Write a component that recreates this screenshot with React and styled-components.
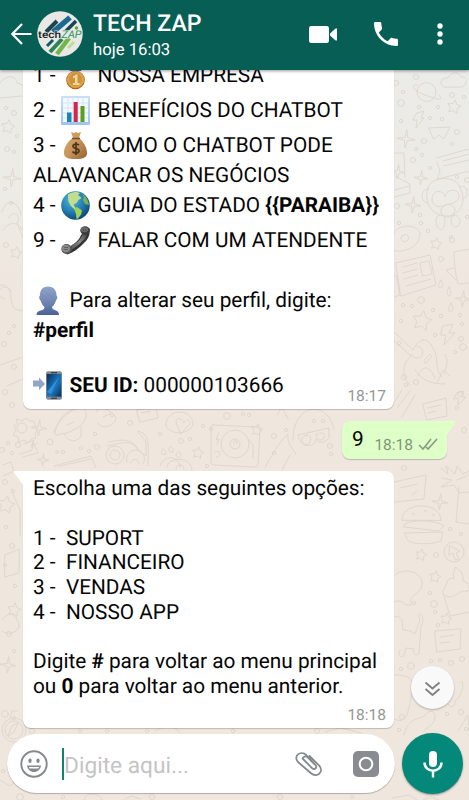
import React from "react";
import styled, { createGlobalStyle } from "styled-components";

const Global = createGlobalStyle`
  * { box-sizing: border-box; }
  html, body { margin: 0; padding: 0; }
  body { font-family: Roboto, "Liberation Sans", sans-serif; overflow: hidden; text-rendering: geometricPrecision; }
`;

const Screen = styled.div`
  position: relative;
  isolation: isolate;
  width: 469px;
  height: 800px;
  display: flex;
  flex-direction: column;
  overflow: hidden;
  background: linear-gradient(#ebebe7 70px, #ecebe6 190px, #efe8e0 255px, #efe6dd 330px, #efe6dd);
`;

const WallpaperArt = styled.svg`
  position: absolute;
  inset: 0;
  z-index: -1;
`;

const Header = styled.header`
  flex: none;
  height: 70px;
  display: flex;
  align-items: center;
  padding: 0 26px 2px 10px;
  color: #fff;
  background: #075e54;
  box-shadow: 0 1px 3px rgba(0, 0, 0, 0.4);
  z-index: 1;
`;

const Contact = styled.div`
  flex: 1;
  display: flex;
  flex-direction: column;
  padding: 5px 0 0 10px;
`;

const ContactName = styled.div`
  font-size: 23.1px;
  font-weight: 500;
  line-height: 27px;
`;

const LastSeen = styled.div`
  font-size: 16.7px;
  line-height: 27px;
`;

const Actions = styled.div`
  display: flex;
  align-items: center;
  svg { display: block; }
`;

const Chat = styled.main`
  flex: 1;
  min-height: 0;
  display: flex;
  flex-direction: column;
  justify-content: flex-end;
  align-items: flex-start;
  gap: 12px;
  padding: 0 22px 6px 23px;
  overflow: hidden;
`;

const Bubble = styled.section`
  position: relative;
  flex: none;
  display: flex;
  flex-direction: column;
  width: ${(p) => (p.$sent ? "105px" : "371px")};
  align-self: ${(p) => (p.$sent ? "flex-end" : "flex-start")};
  padding: ${(p) => p.$pad};
  color: #050505;
  background: ${(p) => (p.$sent ? "#dfffc8" : "#fff")};
  border-radius: ${(p) => p.$radius || "8px"};
  box-shadow: 0 1px 1px rgba(0, 0, 0, 0.2);
`;

const Tail = styled.svg`
  position: absolute;
  top: 0;
  ${(p) => (p.$side === "left" ? "left: -10px;" : "right: -9px;")}
`;

const Line = styled.div`
  display: flex;
  align-items: center;
  flex: none;
  height: ${(p) => p.$h}px;
  font-size: 20.8px;
  white-space: pre;
  b { font-weight: 700; }
`;

const Text = styled.span`
  padding-top: 2px;
`;

const Index = styled(Text)`
  width: 28px;
`;

const Emoji = styled.svg`
  flex: none;
  width: 29px;
  height: 29px;
  margin-right: 7.5px;
`;

const Stamp = styled.span`
  display: flex;
  align-items: center;
  gap: 5px;
  margin-left: auto;
  margin-bottom: ${(p) => p.$drop || 0}px;
  font-size: 15.5px;
  line-height: 16px;
  color: ${(p) => (p.$sent ? "#7f9577" : "#959595")};
  align-self: flex-end;
`;

const Composer = styled.footer`
  flex: none;
  display: flex;
  align-items: center;
  gap: 7px;
  height: 66px;
  padding: 0 6px 7px 7px;
`;

const InputPill = styled.div`
  width: 388px;
  height: 59px;
  display: flex;
  align-items: center;
  padding: 0 16px 0 13px;
  border-radius: 30px;
  background: #fff;
  box-shadow: 0 1px 1px rgba(0, 0, 0, 0.25);
`;

const Placeholder = styled.span`
  flex: 1;
  display: flex;
  align-items: center;
  height: 32px;
  padding-top: 3px;
  margin-left: 14px;
  border-left: 2px solid #128272;
  font-size: 22.7px;
  color: #c4c4c4;
`;

const MicButton = styled.div`
  flex: none;
  width: 61px;
  height: 61px;
  display: grid;
  place-items: center;
  border-radius: 50%;
  background: #04887a;
  box-shadow: 0 1px 2px rgba(0, 0, 0, 0.35);
`;

const ScrollDown = styled.div`
  position: absolute;
  left: 411px;
  top: 666px;
  width: 43px;
  height: 43px;
  display: grid;
  place-items: center;
  padding-top: 3px;
  border-radius: 50%;
  background: #f9f9f9;
  box-shadow: 0 1px 2px rgba(0, 0, 0, 0.25);
`;

/* ---------- wallpaper ---------- */

const starPath = (x, y, r, inner = 0.5, n = 5, rot = 0) =>
  Array.from({ length: n * 2 }, (_, i) => {
    const a = rot - Math.PI / 2 + (i * Math.PI) / n;
    const q = i % 2 ? r * inner : r;
    return `${i ? "L" : "M"}${(x + q * Math.cos(a)).toFixed(1)} ${(y + q * Math.sin(a)).toFixed(1)}`;
  }).join("") + "Z";

const stars = [
  [454, 107, 7], [436, 244, 6], [422, 321, 10], [198, 453, 6], [257, 430, 6], [421, 555, 6], [435, 577, 6], [446, 619, 6], [8, 127, 7], [16, 253, 6], [6, 505, 9], [14, 610, 7],
];
const sparkles = [
  [406, 139, 9], [421, 178, 7], [413, 205, 8], [463, 299, 8], [440, 502, 8], [39, 428, 8], [43, 460, 6], [12, 178, 9], [8, 665, 8], [398, 172, 7],
];
const bubbles = [
  [416, 77, 3], [396, 83, 3], [401, 103, 4], [403, 92, 2], [419, 107, 2], [438, 107, 2], [430, 118, 2], [442, 119, 2], [452, 95, 3], [464, 97, 2], [401, 121, 2], [424, 141, 3], [457, 132, 3], [416, 149, 2], [413, 160, 3], [422, 155, 2], [430, 168, 2], [452, 144, 2], [457, 177, 2], [467, 180, 3], [397, 206, 3], [420, 215, 2], [399, 223, 2], [421, 223, 2], [428, 231, 2], [451, 237, 2], [452, 240, 3], [467, 217, 2], [441, 259, 3], [421, 300, 4], [403, 305, 2], [412, 306, 2], [433, 310, 2], [441, 316, 2], [460, 315, 2], [401, 321, 2], [435, 335, 2], [462, 324, 2], [461, 339, 3], [463, 347, 4], [455, 352, 2], [399, 343, 2], [404, 377, 3], [416, 382, 3], [406, 385, 2], [460, 394, 3], [457, 408, 2], [464, 430, 3], [404, 468, 3], [450, 529, 2], [461, 534, 2], [436, 555, 3], [430, 593, 2], [414, 603, 2], [434, 604, 4], [435, 612, 2], [438, 625, 2], [431, 661, 2], [440, 660, 2], [451, 663, 3], [462, 659, 3], [401, 669, 2], [411, 666, 4], [447, 714, 2], [461, 712, 3], [466, 729, 2], [130, 423, 3], [112, 415, 2], [95, 434, 2], [89, 451, 2], [81, 448, 2], [63, 452, 2], [57, 452, 1.5], [50, 442, 3.5], [97, 447, 3], [160, 434, 2], [181, 441, 3], [190, 439, 2], [203, 426, 2], [227, 416, 4], [243, 414, 2], [249, 415, 2], [211, 429, 2], [207, 466, 2], [274, 436, 3], [274, 453, 2], [286, 430, 2], [314, 421, 2], [323, 421, 2], [330, 446, 3], [331, 454, 2], [18, 445, 3], [8, 443, 2], [2, 450, 3], [12, 453, 2], [7, 149, 3], [14, 152, 2], [17, 136, 2], [5, 189, 2], [6, 245, 3], [11, 203, 2], [6, 108, 2], [14, 113, 3], [9, 333, 2], [14, 326, 2], [4, 344, 3], [14, 367, 3], [5, 392, 3], [12, 405, 3], [5, 482, 3], [13, 491, 2], [6, 527, 2], [12, 546, 3], [5, 565, 2], [15, 586, 2], [9, 634, 3], [14, 651, 2], [5, 714, 4], [14, 718, 2], [3, 771, 2], [399, 730, 2], [402, 717, 3], [32, 731, 3], [80, 731, 2], [107, 731, 2], [147, 731, 2], [233, 731, 2], [317, 731, 3], [20, 797, 4], [63, 797, 2], [152, 797, 3], [280, 797, 3], [352, 797, 2],
];

const doodles = [
  // planet, cloud
  "M417 92a9.500 9.500 0 1 1 19 0a9.500 9.500 0 1 1-19 0M417 85c-8-1-3 6 8 10s20 7 14 0M444 87c-6-3-3-10 4-9c3-7 12-6 13-1c7-1 7 8 1 10z",
  // bolts, paper plane
  "M417 113l7-2-3 7 3 0-8 10 1-8-4 0zM429 128l21-1-6 12-5-4-5 4zM443 326l10-2-4 9 6 0-11 12 2-10-5 0z",
  // ticket and cake
  "M436 158l33-9M437 162l3 9-3 8 5-1 27-7M443 161l26-7M444 166l25-6M390 153l14 0 1 24M395 176l15 8 0 9-16 4M395 190l14-4",
  // monkey
  "M428 188c2-12 30-14 33 2c6 12-2 26-14 26c-15 0-24-14-19-28zM428 189c-8 0-8 14 0 14M460 187c8-4 10 10 3 12M432 200c0-12 12-10 13-3c1-9 15-9 14 0c-1 6-11 8-14 8c-7 4-13 0-13-5zM441 209c-2 10 13 12 14 0c-4-6-8-7-14 0M436 220c0-7 9-7 9 1c0 12-9 11-9-1M451 220c0-7 9-6 9 2c-1 7-9 7-9-2",
  // donut, newspaper
  "M394 233c5-10 26-9 26 2c-1 14-22 20-29 14M402 236c4-4 8 0 6 4c-4 4-9 0-6-4M396 263l34-8 6 30-35 11zM403 267l14-4M403 273l14-4M404 279l14-4M406 286l25-7M420 263l9-2 3 13-9 2zM389 280l7-5 4 20-6 2",
  // cup and drops
  "M469 249l-15 3c0 10 1 20 4 32l11-1M454 268l-8 2 10 10M441 280q-5 8 0 8q4-2 0-8M451 303q-5 9 0 9q4-2 0-9M449 287q4 9 0 9q-4-2 0-9",
  // guitar
  "M392 330l21 20c6-12 14-14 20-2c7 13 0 18 9 29M391 338l20 18c-10 9-9 22-1 29M417 346a6 6 0 1 1-6 8M424 360l6-6 2 2-6 7zM444 374c4-12 4-12 1-20M437 383l6-13 7 6",
  // mask and chat note
  "M415 370c8 12 18 14 30 14M418 376c5-12 12-10 17 2M392 406l10-16M397 408l13-17M402 417l13-22M423 404l23-6 1 18-20 4zM428 408l13-3M428 413l8-2M457 393l7-2-2 6 4 0-8 8 0-7-4 1z",
  // ticket, burger, hand
  "M394 482l32-7-2 24-30 3M400 488l17-4M412 495l5-4M402 520c-1-18 38-20 39 0zM405 524c8-5 31-4 39 2l-5 5-35-4zM405 533l38-1-2 9c-10 4-32 4-34-2zM413 515a1 1 0 1 1 1 0M425 512a1 1 0 1 1 1 0M433 516a1 1 0 1 1 1 0M441 468l7 6-2-8 9 8 2-8 6 8 6-3M442 478l10 2-11 7 13-2 5 8 10-1M457 480l12-5M459 487l-3 35 13 2",
  // pointer badge, ghost, cupcake
  "M444 552a10 10 0 1 1 20 0a10 10 0 1 1-20 0M450 546l10 5-4 2 3 6-4 1-2-7-4 2zM394 576c9-10 30-4 28 9c-1 10-14 9-11 20c-7 3-8-8-17-3M443 591c6-10 4-15 11-12c-2-8 2-9 1-12c8 4 8 10 8 14c5 1 6 5 6 8M443 593l7 23 19-4M443 593c5 8 12 2 16 0c5-4 7 0 10-3",
  // cat, note
  "M394 616c3 2 6-1 8 4l1 10c8 0 12 4 12 4c3-9 7-16 3-18c4-6 7 4 3 10l-2 28c-4 2-6 0-5-5l-8-1-2 8c-4 2-7-1-4-6M435 631l23-2 3 0-1 20-23 3zM440 637l14-2M440 643l9-1M394 675c20 0 20 6 17 22s-4 28-17 22M404 735c5-20 16-14 21-20s11-4 10 3c-2 9-9 9-11 13M460 683c5-8 4 12-5 18c0 7-4 7-7 3M458 731l10-16 1 17",
  // rocket and camera
  "M55 433c2-12 9-20 18-24M82 408c-9 0-21 8-28 23c0 3 1 4 3 4c14-2 26-8 29-18c0-5 0-8-4-9zM67 425l7-3M64 433c2 8 12 11 17 3l0-9M96 412c2-6 13-5 20 6c-1 9-16 12-18 5M103 417l9-4M137 410l19-3 2 11-18 4zM141 413l9-2",
  // helmet
  "M166 425c-1-16 26-18 27-1c-2 11-25 12-27 1zM176 422c0-6 7-3 8 1c3-7 9 0 4 3l-7 8z",
  // turntable
  "M213 425l44 2q3 0 3 3l-2 34q0 3-3 3l-41-2q-3 0-3-3l0-34q0-3 2-3zM221 444a14 14 0 1 1 28 0a14 14 0 1 1-28 0M230 444a5 5 0 1 1 10 0a5 5 0 1 1-10 0M234 444a2 2 0 1 1 3 0M248 439l5 6 0 13M219 432l-3 8 3-1-2 5M215 452a3 3 0 1 1 1 5",
  // buggy
  "M107 446c12-2 24-9 33 6l6 4 0-12c0-6-10-12-8-13c13 4 10 15 10 34M106 455a9 9 0 1 1 18 0a9 9 0 1 1-18 0M110 455a5 5 0 1 1 10 0a5 5 0 1 1-10 0M127 462a9 9 0 1 1 16 2M131 463a4 4 0 1 1 8 1M109 442c15-4 25-2 29 8",
  // paw, camera, face with glasses
  "M162 454c-3-7 4-6 4 0zM169 451c-2-7 6-5 4 1zM176 455c2-7 8-2 3 3zM160 466c4-12 19-11 20 1M167 467c0-9 24-13 25 4M176 469a4 4 0 1 1 8 0M54 466l37-10 5 12M60 466l31-7M277 415l5-8 6 12M293 440c0-38 35-40 41-11M298 435l31-7 0 9c-2 5-9 8-13 2c0 8-16 11-18-4M302 438c5-6 11-2 8 4c-5 6-9 1-8-4M316 435c6-4 10-2 8 3c-4 4-7 2-8-3M265 467l12-20 6-8 5-5c-2 9 7 17 8 21M282 470l8-15",
  // gear and windmill
  "M17 419l5 2 4-3 4 3 4 0 1 5 3 3-3 4 1 5-5 1-3 4-4-3-5 2-1-5-5-2 3-4-2-5 3-2zM17 428a5 5 0 1 1 10 0a5 5 0 1 1-10 0M24 444l10-4-3 7 6-4M20 454l12-4 1-8 5 11-15 4",
  // left margin
  "M0 83c7-9 15-8 17 0l6 2M0 98l22-2M2 212c4-15 17-11 19 3M9 218c2-8 14-4 8 5l6 15M3 230c9-12 18-5 20 1M0 285c15-1 8 18 15 24l8 2M5 299a6 6 0 1 1 6-7M0 365l23-8M7 386l16-7M3 465l8-3 3 9-11 5M11 489l9 21 0 26M5 555l14-6 0 24-14 4zM2 620c10-14 16 0 17 5s-9 12-17 6",
  // compass and lower edge
  "M2 730a12 12 0 1 1 24 0a12 12 0 1 1-24 0M5 730a9 9 0 1 1 18 0a9 9 0 1 1-18 0M12 726l6-3-4 9-6 4zM10 718l2-7 5 0M155 732c6-7 20-7 24 0M325 732l15-4 22 5M0 780l10 6 5-4M84 800c2-8 15-8 18 0M125 799l7-3 8 3M423 800l8-3 8 3M392 798l17-3 8 5",
];

function Wallpaper() {
  return (
    <WallpaperArt width="469" height="800" fill="none" stroke="#ddd6cd" strokeWidth=".9" strokeLinejoin="round" strokeLinecap="round" aria-hidden="true">
      {doodles.map((d, i) => <path key={i} d={d} />)}
      {stars.map(([x, y, r], i) => <path key={i} d={starPath(x, y, r, 0.52, 5, 0.2)} />)}
      {sparkles.map(([x, y, r], i) => <path key={i} d={starPath(x, y, r, 0.24, 4, 0.1)} />)}
      {bubbles.map(([x, y, r], i) => <circle key={i} cx={x} cy={y} r={r * 0.85} />)}
    </WallpaperArt>
  );
}

/* ---------- emoji ---------- */

function Medal() {
  return (
    <Emoji viewBox="0 0 29 29">
      <path d="M6 1h17l-3 9H9z" fill="#3f6fb0" />
      <circle cx="14.500" cy="19" r="9.300" fill="#a8681d" />
      <circle cx="14.500" cy="18.500" r="8.600" fill="#e0a446" />
      <circle cx="14.500" cy="18.500" r="6.500" fill="#cb9244" />
      <path d="M12 15.500l3-2h1.500v8.500h2v2h-6.500v-2h2v-5.500l-2 .8z" fill="#f3d792" />
    </Emoji>
  );
}

function BarChart() {
  return (
    <Emoji viewBox="0 0 29 29">
      <defs>
        <linearGradient id="chartFrame" x2="0" y2="1"><stop stopColor="#c9e0f8" /><stop offset="1" stopColor="#9cc4f2" /></linearGradient>
      </defs>
      <rect width="29" height="29" rx="1" fill="url(#chartFrame)" />
      <rect x="2" y="2" width="25" height="24" fill="#f4f9fd" />
      <path d="M2 7h25M2 12h25M2 17h25M2 22h25M7 2v24M12 2v24M17 2v24M22 2v24" stroke="#cde3f3" strokeWidth=".8" />
      <path d="M6 16.500h4.500v9.500h-4.500z" fill="#1686b4" />
      <path d="M12.700 6h4v20h-4z" fill="#d5254b" />
      <path d="M19.500 10h4v16h-4z" fill="#5a9f20" />
    </Emoji>
  );
}

function MoneyBag() {
  return (
    <Emoji viewBox="0 0 29 29">
      <defs>
        <linearGradient id="bag" x2="1" y2="1"><stop stopColor="#d5a66d" /><stop offset=".5" stopColor="#c8965b" /><stop offset="1" stopColor="#91602f" /></linearGradient>
      </defs>
      <path d="M10 1l3 1 2-1 2 1 3-1-2 6c5 4 8 10 8 15 0 4-3 6-11.500 6s-11.500-2-11.500-6c0-6 4-12 9-15z" fill="url(#bag)" />
      <path d="M11 7.500h8" stroke="#755027" strokeWidth="1.500" />
      <path d="M18 14.200c-1-1.800-6-1.500-6 1 0 3 6 1.500 6 4.500 0 2.700-5 3-6.500.8M15 11v13" fill="none" stroke="#4e351c" strokeWidth="1.700" />
    </Emoji>
  );
}

function Globe() {
  return (
    <Emoji viewBox="0 0 29 29">
      <defs>
        <radialGradient id="sea" cx=".38" cy=".3" r=".75"><stop stopColor="#55b9df" /><stop offset=".55" stopColor="#237fb1" /><stop offset="1" stopColor="#09446f" /></radialGradient>
      </defs>
      <circle cx="14.500" cy="14.500" r="14.300" fill="url(#sea)" />
      <path d="M7 3.500c3-2 6-2.500 9-2.500l3 1-2 2 3.500 3-3 2-2 3-3 1.500 2 3.500 2 2-3-.5-4-4-2-4-.5-4z" fill="#c2de8c" />
      <path d="M13 17.500l3-1.500 5 3.500-1 4-3 4-1.500.5-.5-5z" fill="#9fcf5c" />
      <path d="M21 3c4 2 6 6 7 11l-4-1-2-4 1-3z" fill="#7db354" />
    </Emoji>
  );
}

function Receiver() {
  return (
    <Emoji viewBox="0 0 29 29">
      <defs>
        <linearGradient id="handset" x1="0" y1="1" x2="1" y2="0"><stop stopColor="#4a4a4a" /><stop offset=".5" stopColor="#888" /><stop offset="1" stopColor="#333" /></linearGradient>
      </defs>
      <path d="M28.500 2c1 6-1 11-6 15.500C18 22 12 27 6 28.500L4 26l7-7c4-2 8-6.500 9-10z" fill="#333" />
      <path d="M27 5c-1 6-3 8-7 11.500S13 22 9 25l2-6c5-1.500 9-6 10.500-10.500z" fill="url(#handset)" />
      <ellipse cx="24" cy="4.500" rx="4.700" ry="4.200" fill="#3a3a3a" />
      <ellipse cx="23.500" cy="3.600" rx="3.700" ry="2.600" fill="#6a6a6a" />
      <ellipse cx="5.500" cy="23" rx="5.200" ry="4.900" fill="#555" />
      <ellipse cx="5" cy="22.500" rx="4" ry="3.800" fill="#8a8a8a" />
      <path d="M4 21.500h.1M6 21.500h.1M4 23.500h.1M6 23.500h.1M22.500 4h.1M24.500 4h.1" stroke="#333" strokeWidth="1" strokeLinecap="round" />
    </Emoji>
  );
}

function Person() {
  return (
    <Emoji viewBox="0 0 29 29">
      <defs><linearGradient id="person" x2="0" y2="1"><stop stopColor="#8fa4cb" /><stop offset=".55" stopColor="#7085b0" /><stop offset="1" stopColor="#496197" /></linearGradient></defs>
      <path d="M15 .5c6 0 8.500 4 8.500 9 1.500 1 .5 4-.5 5-1 3-2 5-4 6.500 0 1.500 1 2.500 4 3.500 2 1 3 2 3 4.500H3.500c0-2.500 1-3.500 4-4.500 3-.5 4-2 4-3.500-2-1.500-3-3.500-4-6.500-1-1-2-4-.5-5 0-5 2-9 8-9z" fill="url(#person)" />
    </Emoji>
  );
}

function IncomingPhone() {
  return (
    <Emoji viewBox="0 0 29 29">
      <defs>
        <linearGradient id="phoneGlass" x2="1" y2="1"><stop stopColor="#112845" /><stop offset=".45" stopColor="#126fb7" /><stop offset=".6" stopColor="#1b72ba" /><stop offset="1" stopColor="#082c55" /></linearGradient>
      </defs>
      <path d="M0 9.500h6v-3L12 13l-6 6v-3.500H0z" fill="#91a5c6" />
      <rect x="13" y=".3" width="16" height="28.400" rx="2" fill="#858a92" />
      <rect x="13.800" y="3" width="14.400" height="22.700" fill="url(#phoneGlass)" />
      <path d="M14 21l12-15-8 17z" fill="#49adec" opacity=".55" />
      <path d="M18 1.700h6M18 27.200h6" stroke="#272c34" strokeWidth="1.100" />
    </Emoji>
  );
}

/* ---------- header and composer icons ---------- */

const BackArrow = () => (
  <svg width="22" height="24" viewBox="0 0 22 24" fill="none" stroke="#fff" strokeWidth="2.200"><path d="M21.500 12H2.500M12 2L2.300 12l9.700 10" /></svg>
);

const LogoSvg = styled.svg`
  flex: none;
  margin-left: 5px;
`;

const Logo = () => (
  <LogoSvg width="46" height="46" viewBox="0 0 46 46">
    <circle cx="23" cy="23" r="22.700" fill="#e8e9e5" />
    <g fill="none">
      <path d="M20 10L9 21" stroke="#1c464c" strokeWidth="4" />
      <path d="M33 6.500L16 21" stroke="#1d6793" strokeWidth="5.500" />
      <path d="M39 10l-10 10" stroke="#194656" strokeWidth="3.500" />
      <path d="M16 29l-6 6" stroke="#15586b" strokeWidth="3" />
      <path d="M25 28L13 41" stroke="#2d8354" strokeWidth="4" />
      <path d="M32 27L20 43" stroke="#72b54a" strokeWidth="4.500" />
      <path d="M37 31l-6 6" stroke="#bddc9c" strokeWidth="3" />
    </g>
    <circle cx="39.500" cy="17" r="1.700" fill="#54a54b" />
    <text x="1" y="27" textLength="23" lengthAdjust="spacingAndGlyphs" fontFamily="Roboto, sans-serif" fontSize="10" fontWeight="500" fill="#151b1b" stroke="#e8e9e5" strokeWidth="1" paintOrder="stroke">tech</text>
    <text x="24.500" y="27" textLength="20" lengthAdjust="spacingAndGlyphs" fontFamily="Roboto, sans-serif" fontSize="10.500" fontStyle="italic" fill="#31945e" stroke="#e8e9e5" strokeWidth="1" paintOrder="stroke">ZAP</text>
  </LogoSvg>
);

const VideoIcon = () => (
  <svg width="28" height="17" viewBox="0 0 28 17" fill="#fff"><rect width="20" height="17" rx="2.300" /><path d="M21 7.500L26 3q2-1.500 2 .5v10q0 2-2 .5L21 9.500z" /></svg>
);

const CallIcon = styled.svg`
  margin: 0 0 0 37px;
`;

const MenuIcon = styled.svg`
  margin-left: 39px;
`;

const FaceIcon = () => (
  <svg width="28" height="28" viewBox="0 0 28 28" fill="#85898c">
    <circle cx="14" cy="14" r="12.700" fill="none" stroke="#85898c" strokeWidth="1.900" />
    <ellipse cx="10" cy="10.700" rx="1.700" ry="2.300" /><ellipse cx="18" cy="10.700" rx="1.700" ry="2.300" />
    <path d="M7 15.500h14c-.5 4-3.500 6.500-7 6.500s-6.500-2.500-7-6.500zM9 17c0 1 .8 1.500 1.500 1.500h7c.8 0 1.500-.5 1.500-1.500z" fillRule="evenodd" />
  </svg>
);

const ClipIcon = () => (
  <svg width="28" height="28" viewBox="0 0 28 28" fill="none" stroke="#85898c" strokeWidth="1.800" strokeLinecap="round" strokeLinejoin="round">
    <path d="M7.500 8.500L17.300 18.300c2.500 2 5.200-.8 3.200-3.200L11.200 5C5.500-.2-2.200 6.200 3 12L16 23.300c6 5 13.500-1.800 8.200-7.600L14.500 6M7.500 8.500c2-3.500 4.700-1.800 6.200-.2l5.100 5.300" />
  </svg>
);

const CameraIcon = styled.svg`
  margin-left: 30px;
`;

const menuRows = [
  { n: "1 -", art: <Medal />, text: "NOSSA EMPRESA" },
  { n: "2 -", art: <BarChart />, text: "BENEFÍCIOS DO CHATBOT" },
  { n: "3 -", art: <MoneyBag />, text: "COMO O CHATBOT PODE" },
  { text: "ALAVANCAR OS NEGÓCIOS" },
  { n: "4 -", art: <Globe />, text: <>GUIA DO ESTADO <b>{"{{PARAIBA}}"}</b></> },
  { n: "9 -", art: <Receiver />, text: "FALAR COM UM ATENDENTE" },
  { text: "" },
  { art: <Person />, text: "Para alterar seu perfil, digite:" },
  { text: <b>#perfil</b> },
  { text: "" },
  { art: <IncomingPhone />, text: <><b>SEU ID:</b> 000000103666</>, time: "18:17" },
];

const options = [
  "Escolha uma das seguintes opções:",
  "",
  "1 -  SUPORT",
  "2 -  FINANCEIRO",
  "3 -  VENDAS",
  "4 -  NOSSO APP",
  "",
  <>Digite <b>#</b> para voltar ao menu principal</>,
  <>ou <b>0</b> para voltar ao menu anterior.</>,
];

export default function App() {
  return (
    <Screen>
      <Global />
      <Wallpaper />
      <Header>
        <BackArrow />
        <Logo />
        <Contact>
          <ContactName>TECH ZAP</ContactName>
          <LastSeen>hoje 16:03</LastSeen>
        </Contact>
        <Actions>
          <VideoIcon />
          <CallIcon width="24" height="24" viewBox="3 3 18 18" fill="#fff">
            <path d="M6.620 10.790c1.440 2.830 3.760 5.140 6.590 6.590l2.200-2.200c.27-.27.67-.36 1.020-.24 1.120.37 2.330.57 3.570.57.55 0 1 .45 1 1V20c0 .55-.45 1-1 1-9.390 0-17-7.610-17-17 0-.55.45-1 1-1h3.500c.55 0 1 .45 1 1 0 1.250.2 2.450.57 3.570.11.35.03.74-.25 1.020z" />
          </CallIcon>
          <MenuIcon width="6" height="22" viewBox="0 0 6 22" fill="#fff">
            <circle cx="3" cy="3" r="2.700" /><circle cx="3" cy="11" r="2.700" /><circle cx="3" cy="19" r="2.700" />
          </MenuIcon>
        </Actions>
      </Header>
      <Chat>
        <Bubble $pad="0 8px 6px 10px">
          {menuRows.map((r, i) => (
            <Line key={i} $h={r.art ? 35 : 25}>
              {r.n && <Index>{r.n}</Index>}
              {r.art}
              <Text>{r.text}</Text>
              {r.time && <Stamp $drop={-1}>{r.time}</Stamp>}
            </Line>
          ))}
        </Bubble>
        <Bubble $sent $pad="0 9px 1px 10px" $radius="8px 0 8px 8px">
          <Tail $side="right" width="10" height="16" viewBox="0 0 10 16"><path d="M0 0h9q1 0 .5 1L1 14H0z" fill="#dfffc8" /></Tail>
          <Line $h={37}>
            <Text>9</Text>
            <Stamp $sent $drop={5}>
              18:18
              <svg width="20" height="13" viewBox="0 0 20 13" fill="none" stroke="#879b80" strokeWidth="1.600"><path d="M1 7l4 4L13 1M8 9l2 2L19 1" /></svg>
            </Stamp>
          </Line>
        </Bubble>
        <Bubble $pad="5px 8px 5px 10px" $radius="0 8px 8px 8px">
          <Tail $side="left" width="11" height="16" viewBox="0 0 11 16"><path d="M11 0H1Q0 0 .5 1L10 14h1z" fill="#fff" /></Tail>
          {options.map((t, i) => <Line key={i} $h={24.75}><Text>{t}</Text></Line>)}
          <Line $h={24.5}><Stamp>18:18</Stamp></Line>
        </Bubble>
      </Chat>
      <ScrollDown>
        <svg width="17" height="16" viewBox="0 0 17 16" fill="none" stroke="#808080" strokeWidth="1.800"><path d="M1.500 1.500l7 6 7-6M1.500 8l7 6 7-6" /></svg>
      </ScrollDown>
      <Composer>
        <InputPill>
          <FaceIcon />
          <Placeholder>Digite aqui...</Placeholder>
          <ClipIcon />
          <CameraIcon width="26" height="26" viewBox="0 0 26 26">
            <rect width="26" height="26" rx="5" fill="#888c91" />
            <circle cx="13" cy="13" r="6.300" fill="none" stroke="#fff" strokeWidth="2" />
          </CameraIcon>
        </InputPill>
        <MicButton>
          <svg width="20" height="28" viewBox="0 0 20 28" fill="#fff">
            <rect x="6" y="1" width="8" height="16" rx="4" />
            <path d="M1.500 12.500c0 11 17 11 17 0M10 21v6.500" fill="none" stroke="#fff" strokeWidth="2.400" />
          </svg>
        </MicButton>
      </Composer>
    </Screen>
  );
}
